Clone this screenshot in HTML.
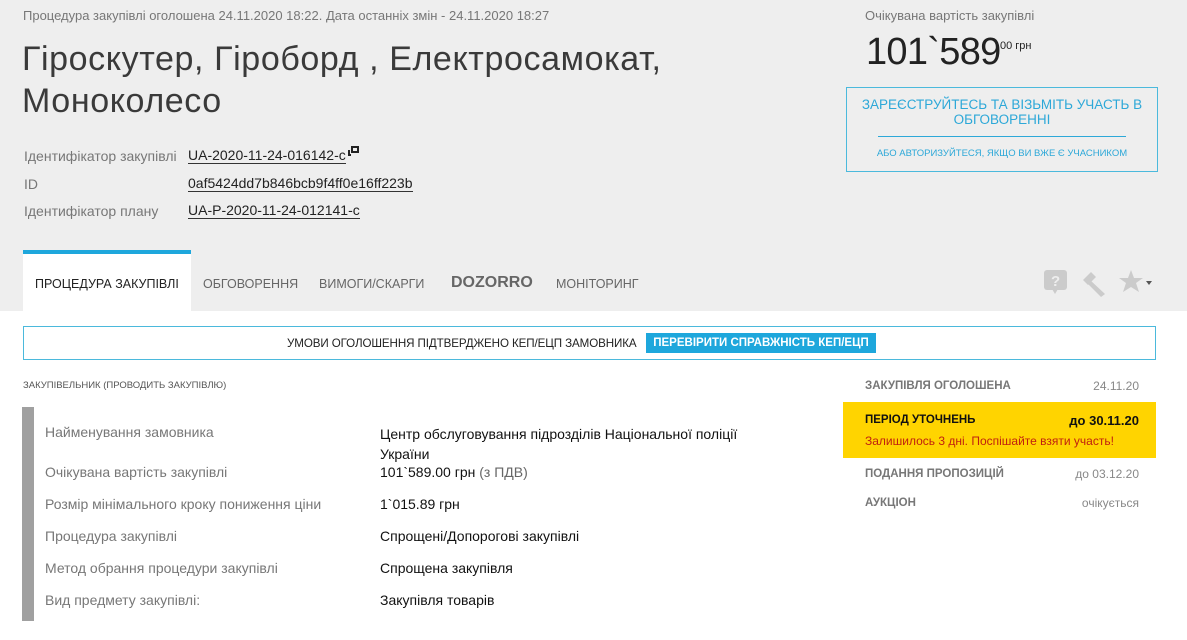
<!DOCTYPE html>
<html><head><meta charset="utf-8"><style>
*{margin:0;padding:0;box-sizing:border-box}
body{width:1187px;height:640px;overflow:hidden;background:#fff;font-family:"Liberation Sans",sans-serif;position:relative;color:#222}
.top{position:absolute;left:0;top:0;width:1187px;height:311px;background:#eeeeee}
.a{position:absolute;white-space:nowrap}
.u{border-bottom:1px solid #333;color:#222}
.lbl{color:#777;font-size:14px}
.tab{position:absolute;top:277px;font-size:12.5px;color:#666}
.row{position:absolute;left:45px;font-size:14px;color:#777}
.val{position:absolute;left:380px;font-size:14px;color:#111}
.tl{position:absolute;left:865px;font-size:11.5px;font-weight:bold;color:#777}
.tr{position:absolute;right:48px;font-size:12px;color:#888}
</style></head><body>
<div class="top"></div>
<div class="a" style="left:23px;top:8px;font-size:13px;color:#777">Процедура закупівлі оголошена 24.11.2020 18:22. Дата останніх змін - 24.11.2020 18:27</div>
<div class="a" style="left:22px;top:38px;font-size:34px;line-height:42px;color:#3a3a3a;letter-spacing:0.6px">Гіроскутер, Гіроборд , Електросамокат,<br>Моноколесо</div>
<div class="a lbl" style="left:24px;top:148px">Ідентифікатор закупівлі</div>
<div class="a" style="left:188px;top:147px;font-size:14px"><span class="u">UA-2020-11-24-016142-c</span></div>
<div class="a" style="left:351px;top:146px;width:8px;height:7px;border:2px solid #222"></div>
<div class="a" style="left:348px;top:150px;width:3px;height:6px;border-left:2px solid #222;border-bottom:2px solid #222"></div>
<div class="a lbl" style="left:24px;top:176px">ID</div>
<div class="a" style="left:188px;top:175px;font-size:14px"><span class="u">0af5424dd7b846bcb9f4ff0e16ff223b</span></div>
<div class="a lbl" style="left:24px;top:203px">Ідентифікатор плану</div>
<div class="a" style="left:188px;top:202px;font-size:14px"><span class="u">UA-P-2020-11-24-012141-c</span></div>

<div class="a" style="left:865px;top:8px;font-size:13px;color:#777">Очікувана вартість закупівлі</div>
<div class="a" style="left:866px;top:31px;font-size:38px;color:#222;letter-spacing:-0.7px">101`589</div>
<div class="a" style="left:1000px;top:40px;font-size:11px;color:#222">00 грн</div>
<div class="a" style="left:846px;top:87px;width:312px;height:85px;border:1.5px solid #4bb9dc"></div>
<div class="a" style="left:846px;top:97px;width:312px;text-align:center;font-size:13.5px;line-height:15px;color:#2da8d8;white-space:normal;padding:0 8px">ЗАРЕЄСТРУЙТЕСЬ ТА ВІЗЬМІТЬ УЧАСТЬ В ОБГОВОРЕННІ</div>
<div class="a" style="left:878px;top:136px;width:248px;height:1px;background:#2da8d8"></div>
<div class="a" style="left:846px;top:148px;width:312px;text-align:center;font-size:9.5px;color:#2da8d8">АБО АВТОРИЗУЙТЕСЯ, ЯКЩО ВИ ВЖЕ Є УЧАСНИКОМ</div>

<div class="a" style="left:23px;top:250px;width:168px;height:61px;background:#fff;border-top:4px solid #1ea7dc"></div>
<div class="tab" style="left:35px;color:#222">ПРОЦЕДУРА ЗАКУПІВЛІ</div>
<div class="tab" style="left:203px">ОБГОВОРЕННЯ</div>
<div class="tab" style="left:319px">ВИМОГИ/СКАРГИ</div>
<div class="tab" style="left:451px;top:274px;font-size:16px;font-weight:bold;color:#666">DOZORRO</div>
<div class="tab" style="left:556px">МОНІТОРИНГ</div>
<svg class="a" style="left:1040px;top:266px" width="120" height="32" viewBox="0 0 120 32">
<rect x="4" y="4" width="23" height="20" rx="3" fill="#cbcbcb"/><path d="M12 23 L15 28 L18 23Z" fill="#cbcbcb"/>
<text x="11" y="20" font-size="15" font-weight="bold" fill="#eee" font-family="Liberation Sans">?</text>
<g fill="#cbcbcb"><path d="M43 14 L51 6 L56 11 L48 19Z"/><path d="M50 14 L65 28 L61 31 L47 17Z"/></g>
<path d="M91 4 L94 12 L103 12 L96 17 L99 26 L91 21 L83 26 L86 17 L79 12 L88 12Z" fill="#cbcbcb"/>
<path d="M106 15 L112 15 L109 19Z" fill="#555"/>
</svg>

<div class="a" style="left:23px;top:326px;width:1133px;height:34px;border:1px solid #4bb9dc"></div>
<div class="a" style="left:287px;top:337px;font-size:11.6px;color:#222;letter-spacing:-0.1px">УМОВИ ОГОЛОШЕННЯ ПІДТВЕРДЖЕНО КЕП/ЕЦП ЗАМОВНИКА</div>
<div class="a" style="left:646px;top:333px;width:230px;height:20px;background:#1ea7dc;color:#fff;font-size:11.5px;font-weight:bold;text-align:center;line-height:20px">ПЕРЕВІРИТИ СПРАВЖНІСТЬ КЕП/ЕЦП</div>

<div class="a" style="left:23px;top:380px;font-size:9.5px;color:#555">ЗАКУПІВЕЛЬНИК (ПРОВОДИТЬ ЗАКУПІВЛЮ)</div>
<div class="a" style="left:22px;top:407px;width:12px;height:214px;background:#a0a0a0"></div>
<div class="row" style="top:424px">Найменування замовника</div>
<div class="val" style="top:424px;line-height:20px">Центр обслуговування підрозділів Національної поліції<br>України</div>
<div class="row" style="top:464px">Очікувана вартість закупівлі</div>
<div class="val" style="top:464px">101`589.00 грн <span style="color:#666">(з ПДВ)</span></div>
<div class="row" style="top:496px">Розмір мінімального кроку пониження ціни</div>
<div class="val" style="top:496px">1`015.89 грн</div>
<div class="row" style="top:528px">Процедура закупівлі</div>
<div class="val" style="top:528px">Спрощені/Допорогові закупівлі</div>
<div class="row" style="top:560px">Метод обрання процедури закупівлі</div>
<div class="val" style="top:560px">Спрощена закупівля</div>
<div class="row" style="top:592px">Вид предмету закупівлі:</div>
<div class="val" style="top:592px">Закупівля товарів</div>

<div class="tl" style="top:380px">ЗАКУПІВЛЯ ОГОЛОШЕНА</div>
<div class="a tr" style="top:379px">24.11.20</div>
<div class="a" style="left:843px;top:402px;width:313px;height:56px;background:#ffd400"></div>
<div class="tl" style="top:414px;color:#111">ПЕРІОД УТОЧНЕНЬ</div>
<div class="a tr" style="top:413px;color:#111;font-weight:bold;font-size:13px">до 30.11.20</div>
<div class="a" style="left:865px;top:434px;font-size:12px;color:#c0200f">Залишилось 3 дні. Поспішайте взяти участь!</div>
<div class="tl" style="top:468px">ПОДАННЯ ПРОПОЗИЦІЙ</div>
<div class="a tr" style="top:467px">до 03.12.20</div>
<div class="tl" style="top:497px">АУКЦІОН</div>
<div class="a tr" style="top:496px">очікується</div>
</body></html>
